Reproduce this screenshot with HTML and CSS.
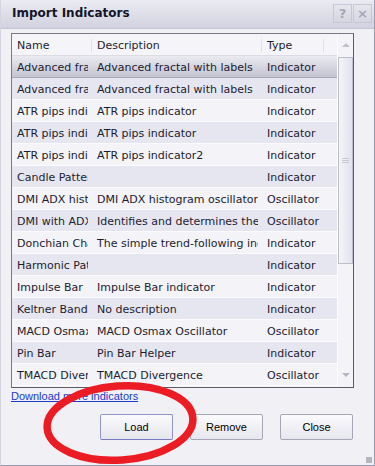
FILE: index.html
```html
<!DOCTYPE html>
<html lang="en">
<head>
    <meta charset="UTF-8">
    <title>Import Indicators</title>
    <link rel="stylesheet" href="styles.css">
</head>
<body>
    <div class="dialog">
        <div class="titlebar">
            <span class="title">Import Indicators</span>
            <span class="tbtn">?</span>
            <span class="tbtn">&times;</span>
        </div>
        <div class="body">
            <div class="list">
                <div class="table">
                    <div class="row head">
                        <span class="c name">Name</span>
                        <span class="c desc">Description</span>
                        <span class="c type">Type</span>
                        <span class="c fill"></span>
                    </div>
                    <div class="row sel"><span class="c name">Advanced fractal with labels</span><span class="c desc">Advanced fractal with labels</span><span class="c type">Indicator</span></div>
                    <div class="row dark"><span class="c name">Advanced fractal with labels</span><span class="c desc">Advanced fractal with labels</span><span class="c type">Indicator</span></div>
                    <div class="row"><span class="c name">ATR pips indicator</span><span class="c desc">ATR pips indicator</span><span class="c type">Indicator</span></div>
                    <div class="row dark"><span class="c name">ATR pips indicator</span><span class="c desc">ATR pips indicator</span><span class="c type">Indicator</span></div>
                    <div class="row"><span class="c name">ATR pips indicator2</span><span class="c desc">ATR pips indicator2</span><span class="c type">Indicator</span></div>
                    <div class="row dark"><span class="c name">Candle Patterns</span><span class="c desc"></span><span class="c type">Indicator</span></div>
                    <div class="row"><span class="c name">DMI ADX histogram</span><span class="c desc">DMI ADX histogram oscillator</span><span class="c type">Oscillator</span></div>
                    <div class="row dark"><span class="c name">DMI with ADX</span><span class="c desc">Identifies and determines the trend</span><span class="c type">Oscillator</span></div>
                    <div class="row"><span class="c name">Donchian Channel</span><span class="c desc">The simple trend-following indicator</span><span class="c type">Indicator</span></div>
                    <div class="row dark"><span class="c name">Harmonic Patterns</span><span class="c desc"></span><span class="c type">Indicator</span></div>
                    <div class="row"><span class="c name">Impulse Bar</span><span class="c desc">Impulse Bar indicator</span><span class="c type">Indicator</span></div>
                    <div class="row dark"><span class="c name">Keltner Bands</span><span class="c desc">No description</span><span class="c type">Indicator</span></div>
                    <div class="row"><span class="c name">MACD Osmax</span><span class="c desc">MACD Osmax Oscillator</span><span class="c type">Oscillator</span></div>
                    <div class="row dark"><span class="c name">Pin Bar</span><span class="c desc">Pin Bar Helper</span><span class="c type">Indicator</span></div>
                    <div class="row"><span class="c name">TMACD Divergence</span><span class="c desc">TMACD Divergence</span><span class="c type">Oscillator</span></div>
                </div>
                <div class="scroll">
                    <div class="arrow up"></div>
                    <div class="thumb"><span class="grip"></span></div>
                    <div class="track"></div>
                    <div class="arrow down"></div>
                </div>
            </div>
            <a class="link" href="#">Download more indicators</a>
            <div class="buttons">
                <button class="btn default">Load</button>
                <button class="btn">Remove</button>
                <button class="btn">Close</button>
            </div>
        </div>
        <svg class="mark" width="375" height="466" viewBox="0 0 375 466">
            <ellipse cx="119" cy="423" rx="73" ry="37" transform="rotate(-4 119 423)" fill="none" stroke="#ec1c24" stroke-width="7.5"/>
        </svg>
        <span class="grip-corner"></span>
    </div>
</body>
</html>
```
FILE: styles.css
```css
body {
    margin: 0;
    padding: 0;
    background: #f0f0f5;
    font-family: "DejaVu Sans", sans-serif;
}

.dialog {
    position: relative;
    width: 375px;
    height: 466px;
    box-sizing: border-box;
    background: #f0f0f5;
    border-left: 1px solid #d4d4e0;
    border-right: 1px solid #9c9cae;
    border-bottom: 1px solid #9c9cae;
    overflow: hidden;
}

.titlebar {
    height: 29px;
    box-sizing: border-box;
    display: flex;
    align-items: center;
    padding: 0 2px 2px 11px;
    background: linear-gradient(#ebebf2, #d2d2e0);
    border-bottom: 1px solid #c4c4d4;
}

.title {
    flex: 1;
    font-weight: bold;
    font-size: 12px;
    color: #15152a;
}

.tbtn {
    width: 17px;
    height: 17px;
    margin-left: 1px;
    border: 1px solid #c6c6d4;
    background: linear-gradient(#e6e6ee, #d6d6e2);
    color: #a6a6b6;
    font-size: 13px;
    font-weight: bold;
    text-align: center;
    line-height: 17px;
}

.body {
    padding: 4px 20px 0 10px;
}

.list {
    display: flex;
    height: 355px;
    box-sizing: border-box;
    border: 1px solid #7a7a86;
    border-right-color: #5c5c66;
    border-bottom-color: #5c5c66;
    background: #f6f6fa;
    overflow: hidden;
}

.table {
    width: 325px;
    font-size: 11px;
    color: #1c1c30;
}

.row {
    display: flex;
    height: 22px;
    box-sizing: border-box;
    align-items: center;
    padding-top: 1px;
    border-bottom: 1px solid #fbfbfe;
    background: #f3f3f8;
}

.row.dark {
    background: #e6e6f0;
}

.row.sel {
    background: linear-gradient(#eaeaf0, #c4c4d2);
    border-bottom: 1px solid #a8a8b8;
}

.row.head {
    background: #f5f5f9;
    border-bottom: 1px solid #dcdce4;
}

.c {
    flex-shrink: 0;
    white-space: nowrap;
    overflow: hidden;
    box-sizing: border-box;
    padding-left: 5px;
    clip-path: inset(0 4px 0 0);
}

.name {
    width: 80px;
}

.desc {
    width: 170px;
}

.type {
    width: 75px;
}

.head .c {
    clip-path: none;
    border-right: 1px solid #dedee6;
    line-height: 13px;
}

.head .type {
    width: 62px;
}

.head .fill {
    width: 13px;
    border-right: none;
}

.scroll {
    width: 17px;
    display: flex;
    flex-direction: column;
    background: #f4f4f8;
    border-left: 1px solid #fdfdff;
}

.arrow {
    height: 22px;
    display: flex;
    align-items: center;
    justify-content: center;
}

.arrow::before {
    content: "";
    border-left: 4px solid transparent;
    border-right: 4px solid transparent;
}

.up::before {
    border-bottom: 4px solid #c0c0cc;
}

.down {
    height: 24px;
}

.down::before {
    border-top: 4px solid #b4b4c6;
}

.thumb {
    height: 207px;
    margin: 1px 0 0 0;
    box-sizing: border-box;
    border: 1px solid #bdbdcc;
    background: linear-gradient(90deg, #f4f4f9, #e2e2ec);
    display: flex;
    align-items: center;
    justify-content: center;
}

.grip {
    width: 7px;
    height: 5px;
    background: repeating-linear-gradient(#c8c8d4 0 1px, transparent 1px 2px);
}

.track {
    flex: 1;
}

.link {
    display: block;
    margin: 2px 0 0 0;
    font-family: "Liberation Sans", Arial, sans-serif;
    font-size: 11px;
    color: #1a3ad0;
    text-decoration: underline;
}

.buttons {
    display: flex;
    justify-content: flex-end;
    gap: 17px;
    margin-top: 12px;
    margin-right: 1px;
}

.btn {
    width: 73px;
    height: 26px;
    font-family: "Liberation Sans", Arial, sans-serif;
    font-size: 11px;
    color: #000;
    background: linear-gradient(#fbfbfd, #e6e6ee);
    border: 1px solid #a6a6b4;
    border-radius: 2px;
    padding: 0;
}

.btn.default {
    border-color: #9494cc;
    border-bottom-color: #7a7ac0;
}

.mark {
    position: absolute;
    left: 0;
    top: 0;
    pointer-events: none;
}

.grip-corner {
    position: absolute;
    right: 2px;
    bottom: 2px;
    width: 6px;
    height: 6px;
    background: radial-gradient(circle, #b0b0c0 0.7px, transparent 0.8px) 0 0 / 2px 2px;
}
```
